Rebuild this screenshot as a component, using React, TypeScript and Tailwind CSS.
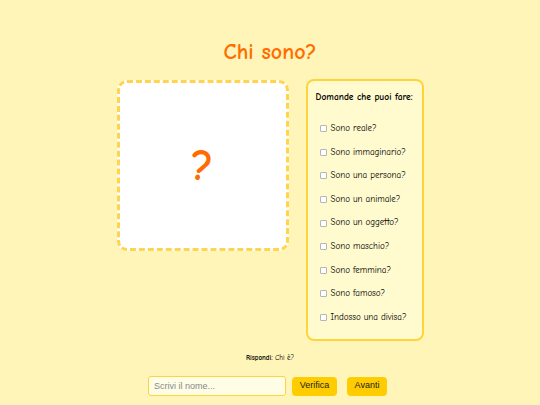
import React from "react";

const questions = [
    "Sono reale?",
    "Sono immaginario?",
    "Sono una persona?",
    "Sono un animale?",
    "Sono un oggetto?",
    "Sono maschio?",
    "Sono femmina?",
    "Sono famoso?",
    "Indosso una divisa?",
];

export default function App() {
    return (
        <div
            className="min-h-screen w-full bg-[#fff5b8] flex flex-col items-center text-black"
            style={{ fontFamily: '"Comic Sans MS", "Comic Neue", cursive' }}
        >
            <h1 className="mt-[36px] text-[22px] leading-[32px] font-bold text-[#ff6d00]">Chi sono?</h1>

            <div className="mt-[11px] flex items-start gap-[17px]">
                {/* Mystery card */}
                <div className="mt-px w-[172px] h-[171px] bg-white border-[3px] border-dashed border-[#ffd54f] rounded-[10px] flex items-center justify-center">
                    <span className="text-[44px] leading-none font-bold text-[#ff6d00]">?</span>
                </div>

                {/* Questions */}
                <div className="w-[118px] h-[262px] bg-[#fffbcf] border-2 border-[#ffd43b] rounded-[8px] px-[8px] pt-[10px]">
                    <h3 className="text-[9.5px] leading-[12px] font-bold whitespace-nowrap">Domande che puoi fare:</h3>
                    <ul className="mt-[14px] pl-[4px]">
                        {questions.map((q) => (
                            <li key={q} className="h-[23.6px] flex items-center gap-[4px] text-[9px] font-medium whitespace-nowrap">
                                <span className="w-[7px] h-[7px] border border-[#b5b5b5] rounded-[1px] bg-white shrink-0" />
                                {q}
                            </li>
                        ))}
                    </ul>
                </div>
            </div>

            <p className="mt-[12px] text-[7px] leading-[10px] font-medium">
                <span className="font-bold">Rispondi:</span> Chi è?
            </p>

            <div className="mt-[13px] flex items-center pr-[5px]" style={{ fontFamily: '"Liberation Sans", Arial, sans-serif' }}>
                <input
                    type="text"
                    placeholder="Scrivi il nome..."
                    className="w-[138px] h-[20px] px-[5px] text-[9px] bg-[#fffde6] border border-[#ffd43b] rounded-[3px] outline-none placeholder:text-[#888]"
                />
                <button className="ml-[6px] w-[45px] h-[19px] bg-[#ffcc00] rounded-[4px] text-[9px] text-[#222]">Verifica</button>
                <button className="ml-[10px] w-[40px] h-[19px] bg-[#ffcc00] rounded-[4px] text-[9px] text-[#222]">Avanti</button>
            </div>
        </div>
    );
}
